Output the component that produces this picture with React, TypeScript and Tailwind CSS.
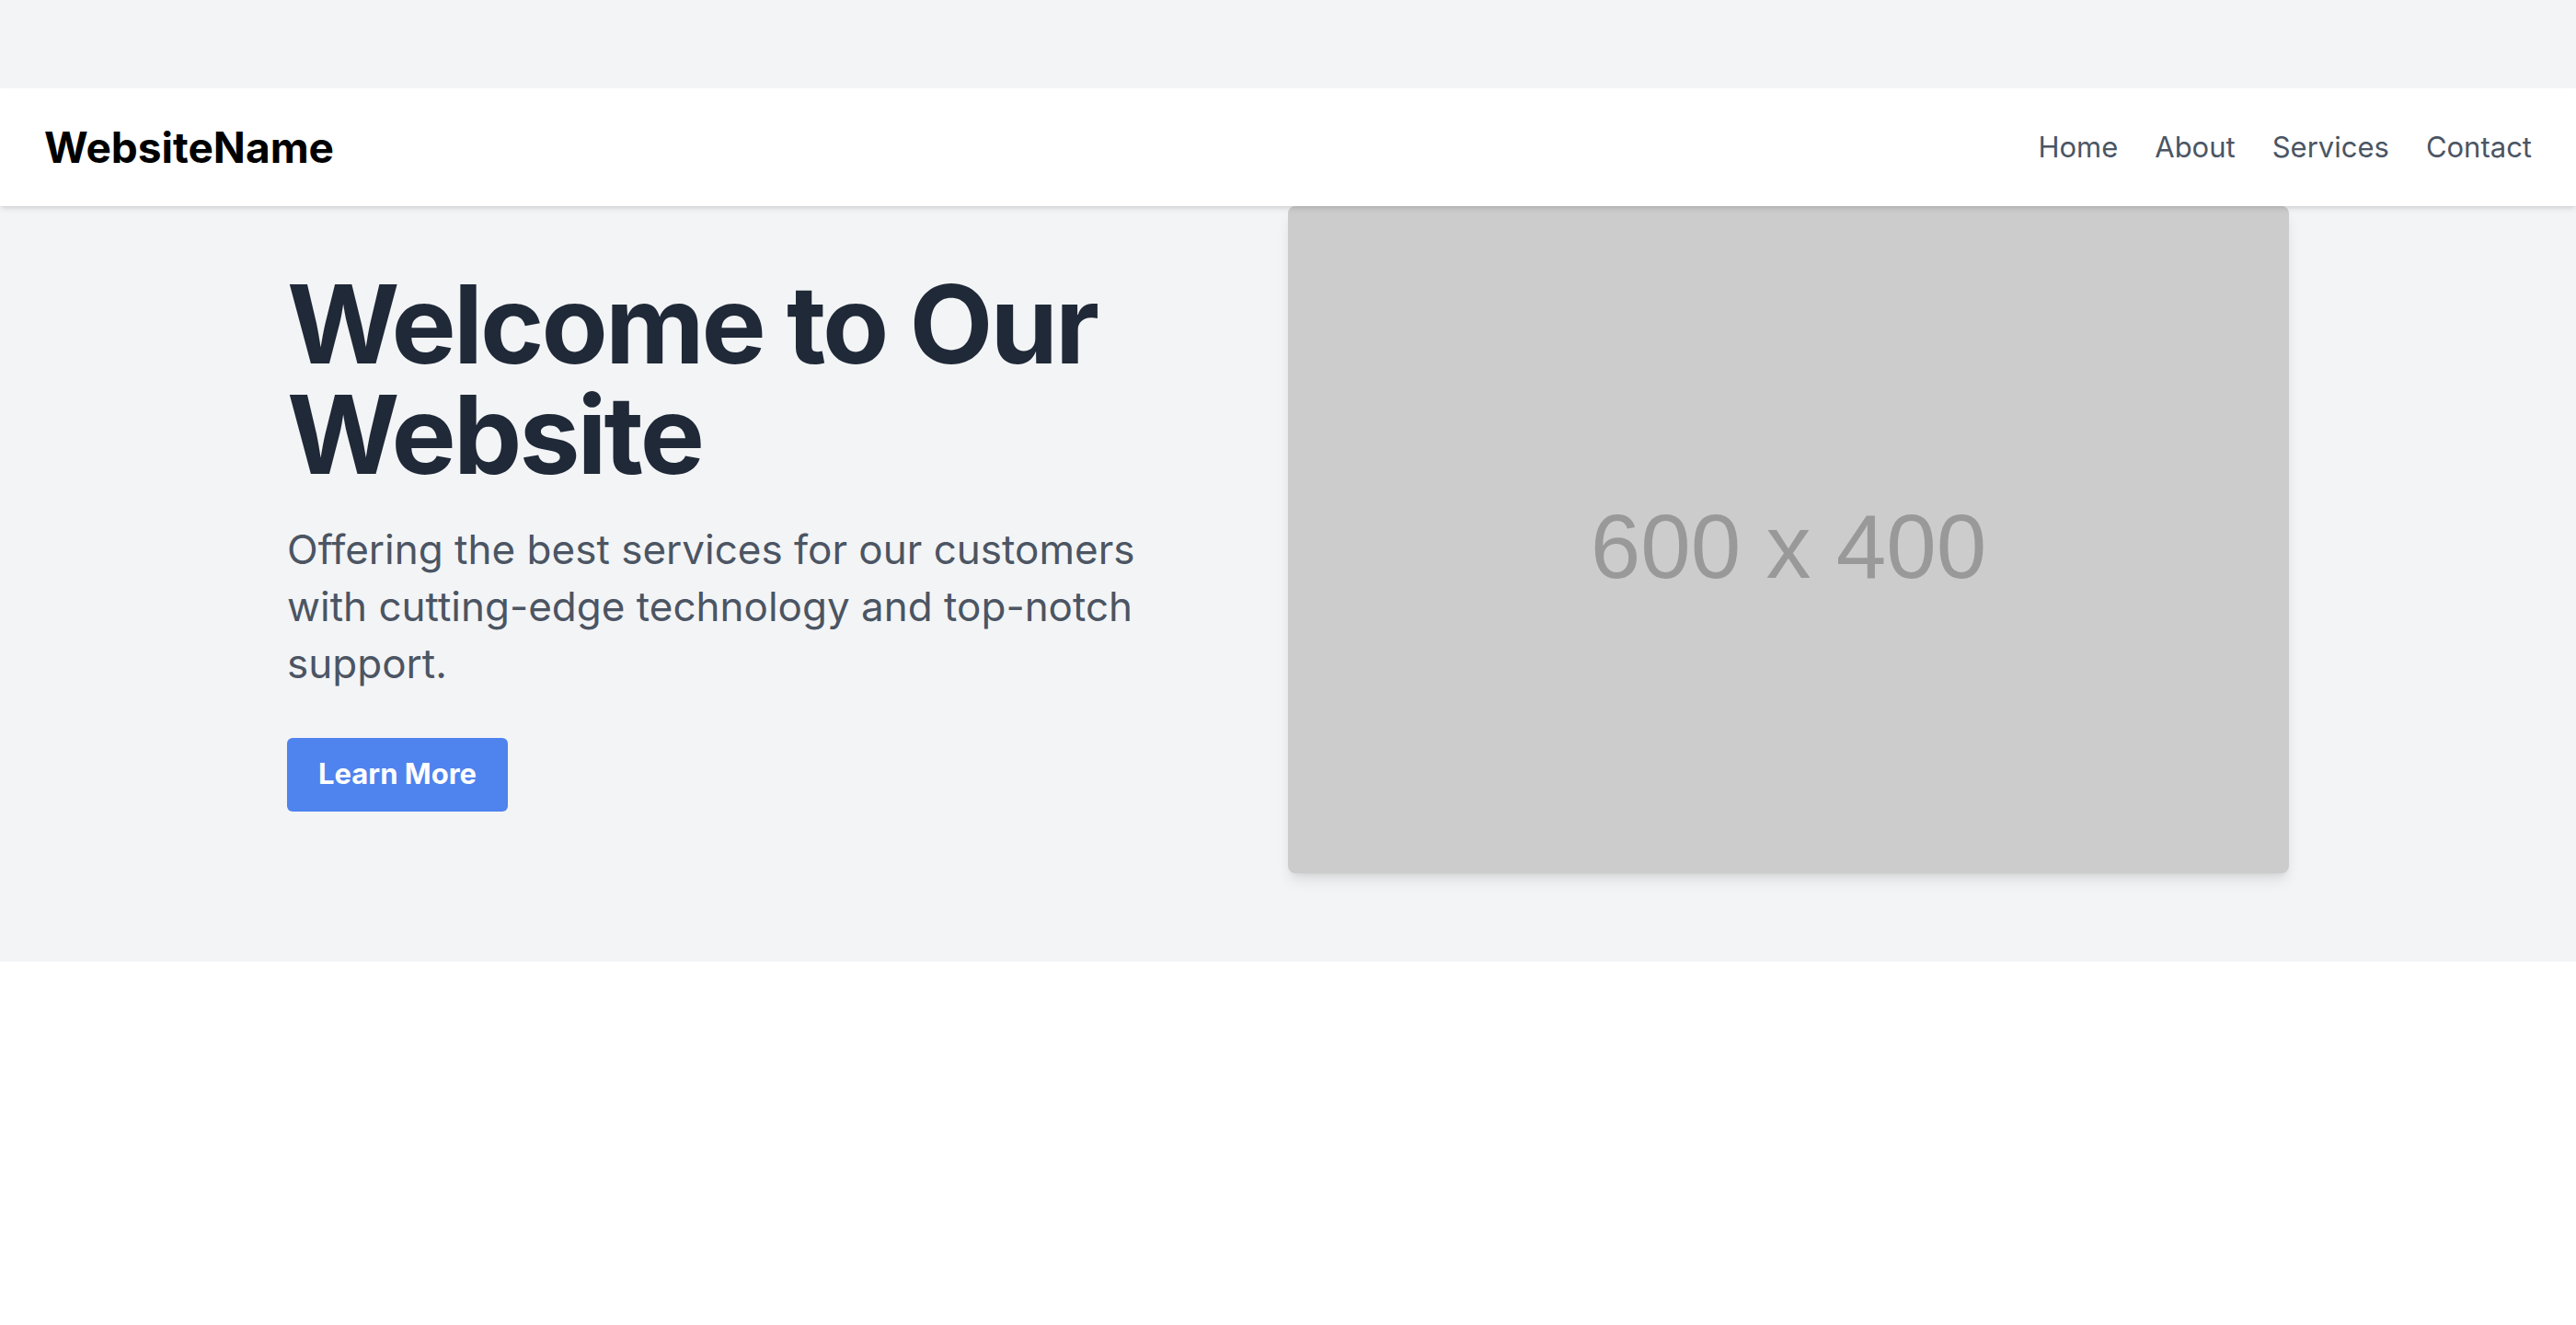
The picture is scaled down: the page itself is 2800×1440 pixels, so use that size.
const links = ["Home", "About", "Services", "Contact"];

export default function App() {
  return (
    <div className="min-h-screen bg-white font-['Inter',sans-serif]">
      <div className="h-[96px] bg-[#f3f4f6]" />
      <nav className="relative z-10 flex h-[128px] items-center justify-between bg-white px-[48px] shadow-md">
        <a href="#" className="text-[46px] font-bold text-black">
          WebsiteName
        </a>
        <div className="flex items-center gap-[40px]">
          {links.map((link) => (
            <a key={link} href="#" className="text-[31px] text-[#4b5563]">
              {link}
            </a>
          ))}
        </div>
      </nav>
      <section className="bg-[#f3f4f6] pb-[96px]">
        <div className="mx-auto flex w-[2176px] items-center">
          <div className="w-1/2">
            <div className="w-[960px]">
              <h1 className="text-[118px] font-bold leading-[120px] tracking-tight text-[#1f2937]">
                Welcome to Our Website
              </h1>
              <p className="mt-[34px] text-[44px] leading-[62px] text-[#4b5563]">
                Offering the best services for our customers with cutting-edge technology and top-notch support.
              </p>
              <a
                href="#"
                className="mt-[50px] inline-flex h-[80px] items-center rounded-[6px] bg-[#4f83ee] px-[34px] text-[31px] font-bold text-white"
              >
                Learn More
              </a>
            </div>
          </div>
          <div className="w-1/2">
            <div className="flex aspect-[3/2] w-full items-center justify-center rounded-[8px] bg-[#cccccc] pt-[16px] shadow-lg">
              <span className="font-['Liberation_Sans',Arial,sans-serif] text-[98px] text-[#999999]">600 x 400</span>
            </div>
          </div>
        </div>
      </section>
    </div>
  );
}
